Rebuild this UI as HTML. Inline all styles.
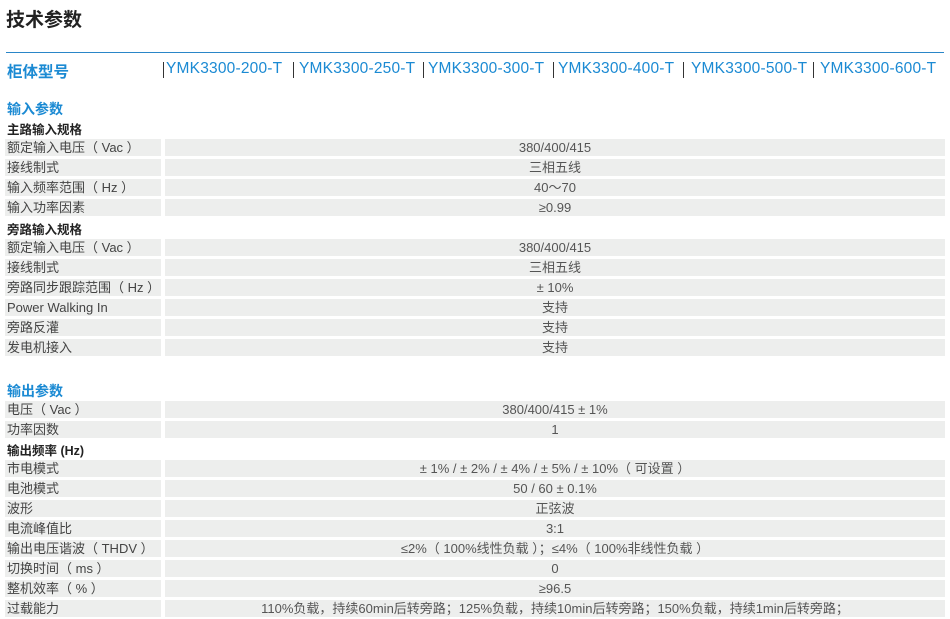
<!DOCTYPE html>
<html><head><meta charset="utf-8"><style>
*{margin:0;padding:0;box-sizing:border-box}
body{width:950px;height:619px;background:#fff;font-family:"Liberation Sans","Noto Sans CJK SC",sans-serif;position:relative;overflow:hidden;color:#444}
.a{position:absolute;white-space:nowrap}
.title{left:6px;top:5px;font-size:19px;font-weight:bold;color:#222}
.line{left:6px;top:52px;width:938px;height:1px;background:#2a86c8}
.hd{top:60px;font-size:15.5px;color:#1b8ad3;letter-spacing:0.2px}
.sec{left:7px;font-size:14px;font-weight:bold;color:#1b8ad3}
.sub{left:7px;font-size:12.5px;font-weight:bold;color:#222}
.l{left:5px;width:156px;height:17px;background:#edeeed;font-size:13px;line-height:17px;padding-left:2px;color:#444}
.v{left:165px;width:780px;height:17px;background:#edeeed;font-size:13px;line-height:17px;text-align:center;color:#555}
.bar{top:62px;width:1px;height:16px;background:#333}
</style></head><body>
<div class="a title">技术参数</div>
<div class="a line"></div>
<div class="a hd" style="left:7px;font-weight:bold;letter-spacing:0">柜体型号</div>
<div class="a bar" style="left:163px"></div>
<div class="a hd" style="left:166px">YMK3300-200-T</div>
<div class="a bar" style="left:293px"></div>
<div class="a hd" style="left:299px">YMK3300-250-T</div>
<div class="a bar" style="left:423px"></div>
<div class="a hd" style="left:428px">YMK3300-300-T</div>
<div class="a bar" style="left:553px"></div>
<div class="a hd" style="left:558px">YMK3300-400-T</div>
<div class="a bar" style="left:683px"></div>
<div class="a hd" style="left:691px">YMK3300-500-T</div>
<div class="a bar" style="left:813px"></div>
<div class="a hd" style="left:820px">YMK3300-600-T</div>

<div class="a sec" style="top:99px">输入参数</div>
<div class="a sub" style="top:119px">主路输入规格</div>
<div class="a l" style="top:139px">额定输入电压（ Vac ）</div><div class="a v" style="top:139px">380/400/415</div>
<div class="a l" style="top:159px">接线制式</div><div class="a v" style="top:159px">三相五线</div>
<div class="a l" style="top:179px">输入频率范围（ Hz ）</div><div class="a v" style="top:179px">40～70</div>
<div class="a l" style="top:199px">输入功率因素</div><div class="a v" style="top:199px">≥0.99</div>
<div class="a sub" style="top:219px">旁路输入规格</div>
<div class="a l" style="top:239px">额定输入电压（ Vac ）</div><div class="a v" style="top:239px">380/400/415</div>
<div class="a l" style="top:259px">接线制式</div><div class="a v" style="top:259px">三相五线</div>
<div class="a l" style="top:279px">旁路同步跟踪范围（ Hz ）</div><div class="a v" style="top:279px">± 10%</div>
<div class="a l" style="top:299px">Power Walking In</div><div class="a v" style="top:299px">支持</div>
<div class="a l" style="top:319px">旁路反灌</div><div class="a v" style="top:319px">支持</div>
<div class="a l" style="top:339px">发电机接入</div><div class="a v" style="top:339px">支持</div>

<div class="a sec" style="top:381px">输出参数</div>
<div class="a l" style="top:401px">电压（ Vac ）</div><div class="a v" style="top:401px">380/400/415 ± 1%</div>
<div class="a l" style="top:421px">功率因数</div><div class="a v" style="top:421px">1</div>
<div class="a sub" style="top:440px">输出频率 (Hz)</div>
<div class="a l" style="top:460px">市电模式</div><div class="a v" style="top:460px">± 1% / ± 2% / ± 4% / ± 5% / ± 10%（ 可设置 ）</div>
<div class="a l" style="top:480px">电池模式</div><div class="a v" style="top:480px">50 / 60 ± 0.1%</div>
<div class="a l" style="top:500px">波形</div><div class="a v" style="top:500px">正弦波</div>
<div class="a l" style="top:520px">电流峰值比</div><div class="a v" style="top:520px">3:1</div>
<div class="a l" style="top:540px">输出电压谐波（ THDV ）</div><div class="a v" style="top:540px">≤2%（ 100%线性负载 ）；≤4%（ 100%非线性负载 ）</div>
<div class="a l" style="top:560px">切换时间（ ms ）</div><div class="a v" style="top:560px">0</div>
<div class="a l" style="top:580px">整机效率（ % ）</div><div class="a v" style="top:580px">≥96.5</div>
<div class="a l" style="top:600px">过载能力</div><div class="a v" style="top:600px">110%负载，持续60min后转旁路；125%负载，持续10min后转旁路；150%负载，持续1min后转旁路；</div>
</body></html>
